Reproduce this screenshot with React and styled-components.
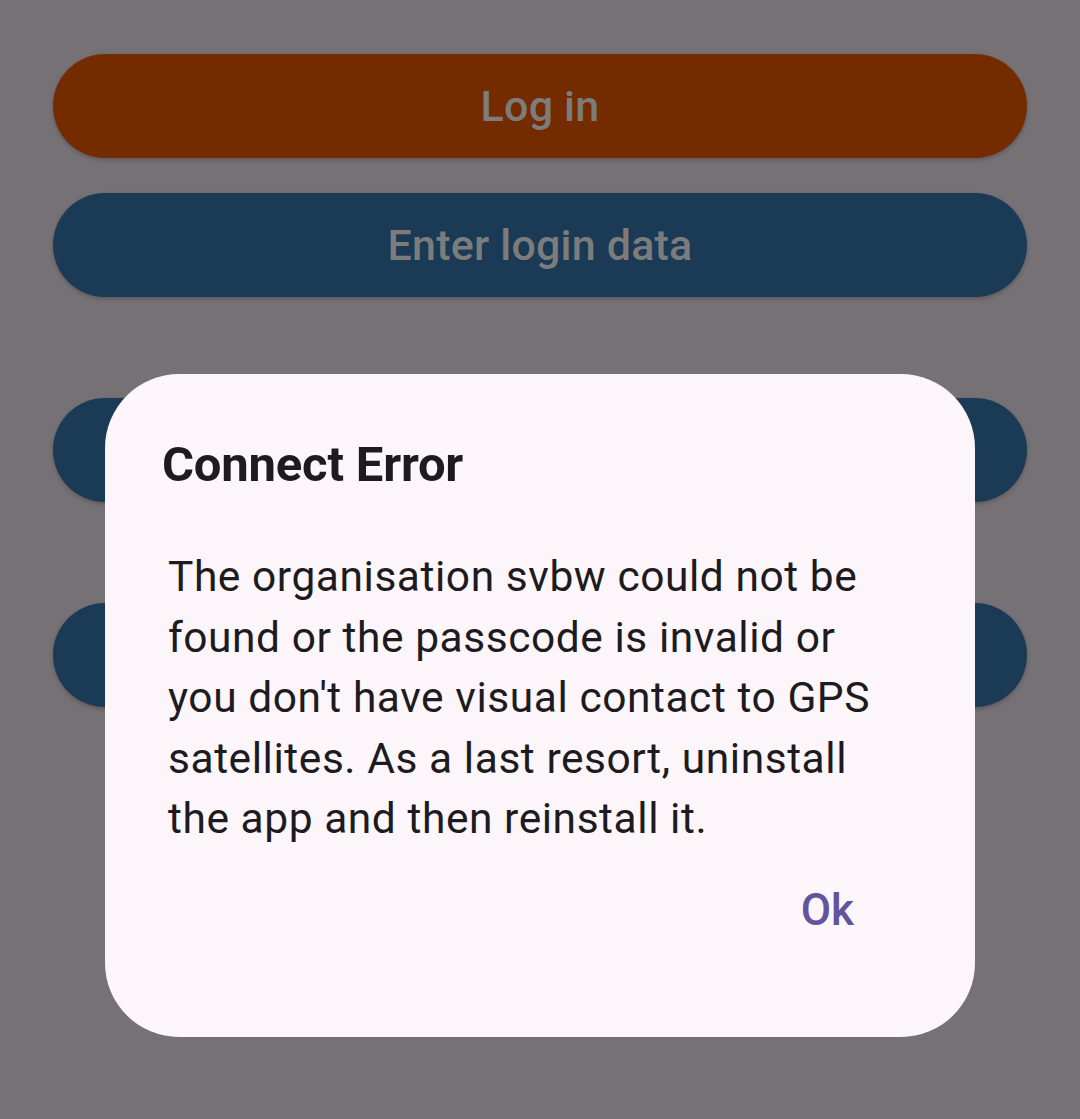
import React from "react";
import styled, { createGlobalStyle } from "styled-components";

const Global = createGlobalStyle`
  html, body { margin: 0; padding: 0; }
  body {
    background: #767175;
    font-family: Roboto, "Noto Sans", "Liberation Sans", sans-serif;
    -webkit-font-smoothing: antialiased;
  }
`;

const Page = styled.div`
  min-height: 1119px;
  box-sizing: border-box;
  padding: 54px 53px 0;
  display: flex;
  flex-direction: column;
`;

const PillButton = styled.button`
  height: 104px;
  width: 100%;
  border: none;
  border-radius: 52px;
  background: ${(p) => (p.$tone === "orange" ? "#752B00" : "#1A3A55")};
  color: #7c7c7c;
  font-family: Roboto, "Noto Sans", sans-serif;
  font-size: 43px;
  font-weight: 500;
  letter-spacing: 0.2px;
  box-shadow: 0 2px 4px rgba(0, 0, 0, 0.22);
  margin-top: ${(p) => p.$gap || 0}px;
  display: flex;
  align-items: center;
  justify-content: center;
  padding: 0;
`;

const Overlay = styled.div`
  position: fixed;
  inset: 0;
  display: flex;
  justify-content: center;
  align-items: flex-start;
  padding-top: 374px;
`;

const Dialog = styled.div`
  width: 870px;
  box-sizing: border-box;
  background: #fcf6fb;
  border-radius: 74px;
  padding: 59px 0 97px;
  display: flex;
  flex-direction: column;
`;

const Title = styled.h2`
  margin: 0;
  padding-left: 57px;
  font-size: 49px;
  line-height: 64px;
  font-weight: 700;
  color: #1d1b20;
  letter-spacing: -0.2px;
`;

const Body = styled.p`
  margin: 50px 0 0;
  padding: 0 80px 0 63px;
  font-size: 42.5px;
  line-height: 60.5px;
  font-weight: 400;
  color: #1d1b20;
  letter-spacing: 0.55px;
`;

const Actions = styled.div`
  margin-top: 30px;
  display: flex;
  justify-content: flex-end;
  padding-right: 121px;
`;

const TextButton = styled.button`
  background: none;
  border: none;
  padding: 0;
  height: 60px;
  line-height: 60px;
  font-family: Roboto, "Noto Sans", sans-serif;
  font-size: 44px;
  font-weight: 500;
  color: #63529e;
`;

export default function App() {
  return (
    <>
      <Global />
      <Page>
        <PillButton $tone="orange">Log in</PillButton>
        <PillButton $gap={35}>Enter login data</PillButton>
        <PillButton $gap={101} />
        <PillButton $gap={101} />
      </Page>
      <Overlay>
        <Dialog role="dialog">
          <Title>Connect Error</Title>
          <Body>
            The organisation svbw could not be found or the passcode is invalid
            or you don't have visual contact to GPS satellites. As a last
            resort, uninstall the app and then reinstall it.
          </Body>
          <Actions>
            <TextButton>Ok</TextButton>
          </Actions>
        </Dialog>
      </Overlay>
    </>
  );
}
